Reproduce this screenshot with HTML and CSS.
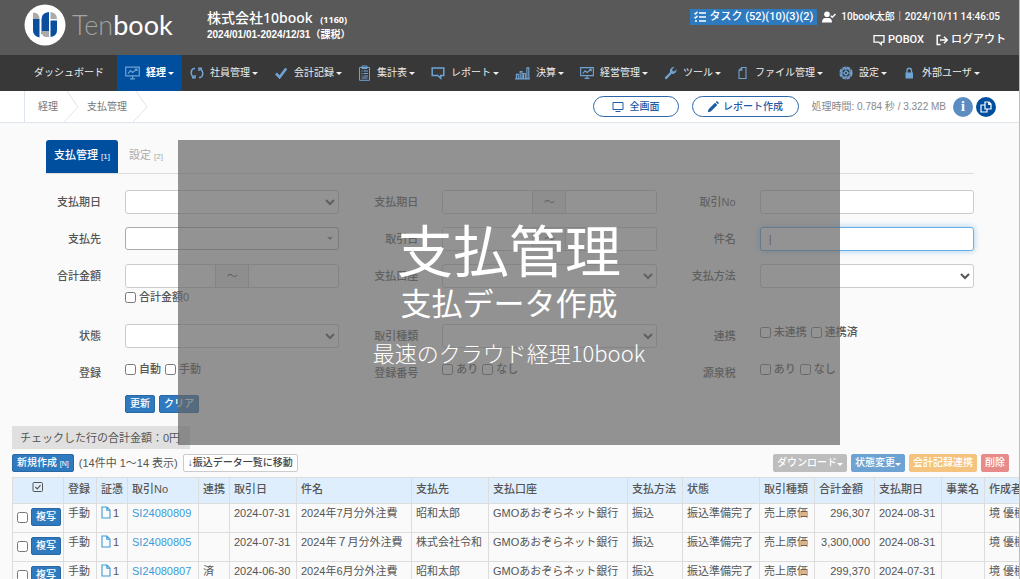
FILE: index.html
```html
<!DOCTYPE html>
<html lang="ja">
<head>
<meta charset="utf-8">
<title>支払管理 - Tenbook</title>
<link rel="stylesheet" href="styles.css">
</head>
<body>
<svg class="defs" width="0" height="0" aria-hidden="true">
  <symbol id="i-monitor" viewBox="0 0 15 14"><path d="M.7 1.2h13.6v8.6H.7zM5 12.800h5M7.500 10v2.800M3 7.600l2.400-3 2.200 1.900L12 3M9.800 3H12v2" fill="none" stroke="currentColor" stroke-width="1.200"/></symbol>
  <symbol id="i-cycle" viewBox="0 0 14 14"><path d="M5 2.500H3.800Q1.200 3.200 1.200 7q0 2.600 2.600 4M9 11.500h1.200q2.600-.7 2.600-4.500 0-2.600-2.600-4M2 11.800h3V9M12 2.200H9V5" fill="none" stroke="currentColor" stroke-width="1.500"/></symbol>
  <symbol id="i-check" viewBox="0 0 14 14"><path d="M2 7.500l3.600 3.700L12.200 2.500" fill="none" stroke="currentColor" stroke-width="2.600"/></symbol>
  <symbol id="i-clip" viewBox="0 0 13 16"><path d="M1.500 2.500h10v12.800h-10zM4 1h5v2.500H4zM3.500 6h1M5.500 6h4.500M3.500 8.500h1M5.500 8.500h4.500M3.500 11h1M5.500 11h4.500M3.500 13h6" fill="none" stroke="currentColor" stroke-width="1"/></symbol>
  <symbol id="i-chat" viewBox="0 0 14 14"><path d="M1.200 2h11.600v7.500H9.700v2.800L6.700 9.500H1.200z" fill="none" stroke="currentColor" stroke-width="1.500"/></symbol>
  <symbol id="i-bars" viewBox="0 0 16 14"><path d="M0 13.300h16M1.500 13V8.500h2V13M5.500 13V5.500h2V13M9 13V7.500h2V13M12.700 13V1.500h2V13" fill="none" stroke="currentColor" stroke-width="1.200"/></symbol>
  <symbol id="i-wrench" viewBox="0 0 13 14"><path d="M1 11.200L6 6.300Q5.300 3.500 7.300 2q1.400-1.200 3-.8L8.200 3.300l.3 1.800 1.800.3 2.100-2.100q.5 1.800-.8 3.300-1.500 1.700-4 1.200L2.700 12.900q-.7.500-1.500-.1-.7-.9-.2-1.600z" fill="currentColor"/></symbol>
  <symbol id="i-file" viewBox="0 0 12 14"><path d="M4.800 1.500H9v11H2V4.300zM4.800 1.500v2.800H2" fill="none" stroke="currentColor" stroke-width="1.100"/></symbol>
  <symbol id="i-gear" viewBox="0 0 14 14"><circle cx="7" cy="7" r="5.800" fill="none" stroke="currentColor" stroke-width="1.600" stroke-dasharray="3.700 .85"/><circle cx="7" cy="7" r="4.400" fill="none" stroke="currentColor" stroke-width="1.300"/><circle cx="7" cy="7" r="1.700" fill="none" stroke="currentColor" stroke-width="1.200"/><path d="M7 3v2.300M7 8.700V11M3 7h2.300M8.700 7H11" stroke="currentColor"/></symbol>
  <symbol id="i-lock" viewBox="0 0 13 14"><path d="M2.500 6.500h7.500v6H2.500z" fill="currentColor"/><path d="M4 7V4.500a2.200 2.200 0 0 1 4.500 0V7" fill="none" stroke="currentColor" stroke-width="1.300"/></symbol>
  <symbol id="i-tasks" viewBox="0 0 12 12"><path d="M.5 2l1 1L3.500.8M.5 6l1 1 2-2.200M5 2h7M5 6h7M5 10h7M1 10h2" fill="none" stroke="currentColor" stroke-width="1.400"/></symbol>
  <symbol id="i-user" viewBox="0 0 14 12"><circle cx="5" cy="3.300" r="2.800" fill="currentColor"/><path d="M0 11.500Q0 7 3.500 7h3Q10 7 10 11.500z" fill="currentColor"/><path d="M8.800 4.800l1.500 1.500L13.500 3" fill="none" stroke="currentColor" stroke-width="1.400"/></symbol>
  <symbol id="i-out" viewBox="0 0 12 12"><path d="M4.500 1.500H1.200v9h3.300M4 6h7M8 2.800L11.200 6 8 9.200" fill="none" stroke="currentColor" stroke-width="1.500"/></symbol>
  <symbol id="i-screen" viewBox="0 0 12 12"><path d="M1 1.500h10v7H1zM3.500 10.500h5" fill="none" stroke="currentColor" stroke-width="1"/></symbol>
  <symbol id="i-pencil" viewBox="0 0 12 12"><path d="M.8 11.200l.7-3L8 1.700l2.300 2.300-6.500 6.500zM8.700 1l.8-.7q.6-.3 1 .1l1.100 1.200q.4.500 0 1l-.7.700z" fill="currentColor"/></symbol>
  <symbol id="i-copy" viewBox="0 0 12 12"><path d="M5 1h4l2 2v5H5zM5 4H1v7h6V8M8.700 1v2.300H11" fill="none" stroke="currentColor" stroke-width="1.200"/></symbol>
  <symbol id="i-doc" viewBox="0 0 10 13"><path d="M1 1h4.800L9 4.200V12H1zM5.800 1v3.200H9" fill="none" stroke="currentColor" stroke-width="1.100"/></symbol>
  <symbol id="i-checkbox" viewBox="0 0 12 12"><rect x="1" y="1.500" width="9.500" height="9" rx="1" fill="none" stroke="currentColor"/><path d="M3.300 5.800l2 2 3.200-3.600" fill="none" stroke="currentColor" stroke-width="1.200"/></symbol>
</svg>

<header class="top">
  <a class="logo" href="#">
    <svg class="logo-mark" viewBox="0 0 42 42" aria-hidden="true">
      <circle cx="21" cy="21" r="20.500" fill="#fff"/>
      <path d="M9 8.500q6.500.3 6.500 6.500H9z" fill="#aaa"/><path d="M9 15h6.500v18.500Q9 32 9 26z" fill="#0a4f9e"/>
      <path d="M17.500 15q0-6 7.500-7v22h-7.500z" fill="#0a4f9e"/><path d="M17.500 27H25v6h-3q-4.500-.5-4.500-6z" fill="#aaa"/>
      <path d="M26.500 8q6.500 1 6.500 7h-6.500z" fill="#aaa"/><path d="M26.500 16.500H33V26q0 6-6.500 7z" fill="#0a4f9e"/>
    </svg>
    <span class="logo-text"><span class="logo-dim">Ten</span>book</span>
  </a>
  <div class="company">
    <div class="company-name">株式会社10book <small>(1160)</small></div>
    <div class="company-term">2024/01/01-2024/12/31（課税）</div>
  </div>
  <div class="account">
    <div class="account-row">
      <a class="task" href="#"><svg class="ico12"><use href="#i-tasks"/></svg>タスク (52)(10)(3)(2)</a>
      <svg class="ico14"><use href="#i-user"/></svg><span>10book太郎｜2024/10/11 14:46:05</span>
    </div>
    <div class="account-row links">
      <a href="#"><svg class="ico12"><use href="#i-chat"/></svg>POBOX</a>
      <a href="#"><svg class="ico12"><use href="#i-out"/></svg>ログアウト</a>
    </div>
  </div>
</header>

<nav class="nav">
  <a class="dash" href="#">ダッシュボード</a>
  <a class="active" href="#"><svg class="w15"><use href="#i-monitor"/></svg>経理<i class="caret"></i></a>
  <a href="#"><svg class="w14"><use href="#i-cycle"/></svg>社員管理<i class="caret"></i></a>
  <a href="#"><svg class="w14"><use href="#i-check"/></svg>会計記録<i class="caret"></i></a>
  <a href="#"><svg class="w13"><use href="#i-clip"/></svg>集計表<i class="caret"></i></a>
  <a href="#"><svg class="w14"><use href="#i-chat"/></svg>レポート<i class="caret"></i></a>
  <a href="#"><svg class="w15"><use href="#i-bars"/></svg>決算<i class="caret"></i></a>
  <a href="#"><svg class="w14"><use href="#i-monitor"/></svg>経営管理<i class="caret"></i></a>
  <a href="#"><svg class="w13"><use href="#i-wrench"/></svg>ツール<i class="caret"></i></a>
  <a href="#"><svg class="w12"><use href="#i-file"/></svg>ファイル管理<i class="caret"></i></a>
  <a href="#"><svg class="w14"><use href="#i-gear"/></svg>設定<i class="caret"></i></a>
  <a href="#"><svg class="w13"><use href="#i-lock"/></svg>外部ユーザ<i class="caret"></i></a>
</nav>

<div class="subbar">
  <div class="crumbs">
    <a href="#">経理</a><svg class="sep" viewBox="0 0 16 31"><path d="M4 0l11 16L1 31" fill="none" stroke="#dde4ec"/></svg>
    <a href="#">支払管理</a><svg class="sep" viewBox="0 0 16 31"><path d="M4 0l11 16L1 31" fill="none" stroke="#dde4ec"/></svg>
  </div>
  <div class="tools">
    <button class="pill" type="button"><svg class="ico12"><use href="#i-screen"/></svg>全画面</button>
    <button class="pill wide" type="button"><svg class="ico12"><use href="#i-pencil"/></svg>レポート作成</button>
    <span class="time">処理時間: 0.784 秒 / 3.322 MB</span>
    <button class="round info" type="button" aria-label="情報">i</button>
    <button class="round" type="button" aria-label="コピー"><svg class="ico12"><use href="#i-copy"/></svg></button>
  </div>
</div>

<main>
  <div class="tabs">
    <a class="tab on" href="#">支払管理 <small>[1]</small></a>
    <a class="tab" href="#">設定 <small>[2]</small></a>
  </div>

  <form class="search">
    <div class="field"><label for="f1">支払期日</label><select id="f1" class="ctl"><option></option></select></div>
    <div class="field"><label for="f2">支払期日</label><div class="range"><input id="f2" type="text"><span>～</span><input type="text" aria-label="支払期日 終了"></div></div>
    <div class="field"><label for="f3">取引No</label><input id="f3" class="ctl" type="text"></div>

    <div class="field"><label for="f4">支払先</label><button id="f4" class="ctl combo" type="button"><i class="caret"></i></button></div>
    <div class="field"><label for="f5">取引日</label><div class="range"><input id="f5" type="text"><span>～</span><input type="text" aria-label="取引日 終了"></div></div>
    <div class="field"><label for="f6">件名</label><input id="f6" class="ctl focus" type="text" value="|"></div>

    <div class="field tall"><label for="f7">合計金額</label><div class="stack"><div class="range"><input id="f7" type="text"><span>～</span><input type="text" aria-label="合計金額 上限"></div><div class="checks"><label><input type="checkbox">合計金額0</label></div></div></div>
    <div class="field tall"><label for="f8">支払口座</label><select id="f8" class="ctl"><option></option></select></div>
    <div class="field tall"><label for="f9">支払方法</label><select id="f9" class="ctl"><option></option></select></div>

    <div class="field"><label for="f10">状態</label><select id="f10" class="ctl"><option></option></select></div>
    <div class="field"><label for="f11">取引種類</label><select id="f11" class="ctl"><option></option></select></div>
    <div class="field"><span class="name">連携</span><div class="checks"><label><input type="checkbox">未連携</label><label><input type="checkbox">連携済</label></div></div>

    <div class="field"><span class="name">登録</span><div class="checks"><label><input type="checkbox">自動</label><label><input type="checkbox">手動</label></div></div>
    <div class="field"><span class="name">登録番号</span><div class="checks"><label><input type="checkbox">あり</label><label><input type="checkbox">なし</label></div></div>
    <div class="field"><span class="name">源泉税</span><div class="checks"><label><input type="checkbox">あり</label><label><input type="checkbox">なし</label></div></div>

    <div class="actions"><button class="btn" type="button">更新</button><button class="btn" type="button">クリア</button></div>
  </form>

  <div class="sum">チェックした行の合計金額：0円</div>

  <div class="bar">
    <button class="btn" type="button">新規作成 <small>[N]</small></button>
    <span class="count">(14件中 1～14 表示)</span>
    <button class="btn plain" type="button">↓振込データ一覧に移動</button>
    <div class="bar-right">
      <button class="btn grey" type="button">ダウンロード<i class="caret"></i></button>
      <button class="btn sky" type="button">状態変更<i class="caret"></i></button>
      <button class="btn amber" type="button">会計記録連携</button>
      <button class="btn red" type="button">削除</button>
    </div>
  </div>

  <div class="table-wrap">
    <table class="list">
      <colgroup><col class="c51"><col class="c33"><col class="c31"><col class="c71"><col class="c31"><col class="c67"><col class="c115"><col class="c77"><col class="c139"><col class="c55"><col class="c77"><col class="c55"><col class="c60"><col class="c67"><col class="c43"><col class="c67"></colgroup>
      <thead><tr><th class="mid"><svg class="ico12"><use href="#i-checkbox"/></svg></th><th>登録</th><th>証憑</th><th>取引No</th><th>連携</th><th>取引日</th><th>件名</th><th>支払先</th><th>支払口座</th><th>支払方法</th><th>状態</th><th>取引種類</th><th>合計金額</th><th>支払期日</th><th>事業名</th><th>作成者</th></tr></thead>
      <tbody>
        <tr><td><div class="pick"><input type="checkbox" aria-label="SI24080809"><button class="btn" type="button">複写</button></div></td><td>手動</td><td><svg class="doc"><use href="#i-doc"/></svg>1</td><td><a href="#">SI24080809</a></td><td></td><td>2024-07-31</td><td>2024年7月分外注費</td><td>昭和太郎</td><td>GMOあおぞらネット銀行</td><td>振込</td><td>振込準備完了</td><td>売上原価</td><td class="num">296,307</td><td>2024-08-31</td><td></td><td>境 優樹</td></tr>
        <tr><td><div class="pick"><input type="checkbox" aria-label="SI24080805"><button class="btn" type="button">複写</button></div></td><td>手動</td><td><svg class="doc"><use href="#i-doc"/></svg>1</td><td><a href="#">SI24080805</a></td><td></td><td>2024-07-31</td><td>2024年７月分外注費</td><td>株式会社令和</td><td>GMOあおぞらネット銀行</td><td>振込</td><td>振込準備完了</td><td>売上原価</td><td class="num">3,300,000</td><td>2024-08-31</td><td></td><td>境 優樹</td></tr>
        <tr><td><div class="pick"><input type="checkbox" aria-label="SI24080807"><button class="btn" type="button">複写</button></div></td><td>手動</td><td><svg class="doc"><use href="#i-doc"/></svg>1</td><td><a href="#">SI24080807</a></td><td>済</td><td>2024-06-30</td><td>2024年6月分外注費</td><td>昭和太郎</td><td>GMOあおぞらネット銀行</td><td>振込</td><td>振込準備完了</td><td>売上原価</td><td class="num">299,370</td><td>2024-07-31</td><td></td><td>境 優樹</td></tr>
      </tbody>
    </table>
  </div>
</main>

<section class="overlay">
  <h1>支払管理</h1>
  <h2>支払データ作成</h2>
  <p>最速のクラウド経理10book</p>
</section>
</body>
</html>
```
FILE: styles.css
```css
* { box-sizing: border-box; }
html { height: 100%; }
body {
  position: relative;
  margin: 0;
  height: 100%;
  overflow: hidden;
  background: #fafafa;
  border-right: 1px solid #bdbdbd;
  color: #555;
  font: 11px/16px "Liberation Sans", "Noto Sans CJK JP", sans-serif;
}
a { color: inherit; text-decoration: none; }
button, input, select { font: inherit; color: inherit; margin: 0; }
svg { flex: none; }
.defs { position: absolute; }
.ico12 { width: 12px; height: 12px; }
.ico14 { width: 14px; height: 12px; }
.caret {
  display: inline-block;
  margin-left: 2px;
  border: 3px solid transparent;
  border-top-color: currentColor;
  border-bottom: 0;
}

.top {
  display: flex;
  height: 55px;
  padding: 4px 13px 0 24px;
  background: #595959;
  color: #fff;
}
.logo { display: flex; align-items: center; gap: 6px; width: 183px; height: 42px; }
.logo-mark { width: 42px; height: 42px; }
.logo-text { font: 400 27px/42px Lato, sans-serif; color: #fff; }
.logo-dim { color: #a3a3a3; font-weight: 300; }
.company-name { font: 500 14px/20px "Noto Sans", "Noto Sans CJK JP", sans-serif; padding-top: 4px; }
.company-name small { font: bold 9px "Noto Sans", sans-serif; margin-left: 4px; }
.company-term { font: bold 10px/13px "Liberation Sans", "Noto Sans CJK JP", sans-serif; }
.account { margin-left: auto; font-family: Roboto, "Noto Sans CJK JP", sans-serif; font-weight: 500; }
.account-row { display: flex; align-items: center; justify-content: flex-end; gap: 5px; height: 16px; margin-top: 5px; padding-right: 6px; font-size: 10px; }
.task { display: flex; align-items: center; gap: 3px; height: 16px; padding: 0 4px; background: #2f7abf; font-size: 11px; }
.links { gap: 12px; margin-top: 7px; padding: 0; font-size: 11px; }
.links a { display: flex; align-items: center; gap: 3px; }

.nav { display: flex; height: 36px; padding-left: 20px; background: #383838; color: #eee; font-size: 10px; font-weight: 400; }
.nav a { display: flex; align-items: center; padding: 0 8px; white-space: nowrap; }
.nav .dash { padding: 0 13px 0 14px; }
.nav .active { background: #004f9f; color: #fff; font-weight: 700; }
.nav svg { height: 16px; margin-right: 6px; color: #6fa3d4; }
.w12 { width: 12px; }
.w13 { width: 13px; }
.w14 { width: 14px; }
.w15 { width: 15px; }

.subbar { display: flex; align-items: center; justify-content: space-between; height: 32px; padding: 0 23px 0 24px; background: #fff; border-bottom: 1px solid #dfe5ec; }
.crumbs { display: flex; align-items: center; height: 31px; border-left: 1px solid #dde4ec; padding-left: 13px; font-size: 10px; color: #777; }
.sep { width: 16px; height: 31px; margin: 0 8px 0 5px; }
.tools { display: flex; align-items: center; }
.pill { display: flex; align-items: center; justify-content: center; gap: 6px; width: 86px; height: 21px; padding: 0; margin-right: 13px; background: #fff; border: 1px solid #2b66aa; border-radius: 11px; color: #1d5ca5; font-size: 10px; font-weight: 500; line-height: 16px; }
.pill.wide { width: 107px; gap: 4px; }
.time { font-size: 10px; color: #888; margin-right: 7px; }
.round { display: flex; align-items: center; justify-content: center; width: 20px; height: 20px; margin-left: 3px; padding: 0; border: 0; border-radius: 50%; background: #004f9f; color: #fff; }
.round.info { margin-left: 0; background: #5b8dc3; font: bold 14px "Liberation Serif", serif; }

.tabs { display: flex; margin: 17px 45px 0 46px; border-bottom: 1px solid #ddd; }
.tab { height: 33px; padding: 7px 8px 0; color: #aaa; line-height: 16px; }
.tab small { font-size: 8px; }
.tab.on { margin-right: 3px; background: #004f9f; color: #fff; border-radius: 3px 3px 0 0; font-weight: 500; }

.search { display: grid; grid-template-columns: repeat(3, 1fr); gap: 13px 24px; margin: 16px 45px 0 46px; }
.field { display: grid; grid-template-columns: 55px minmax(0, 1fr); column-gap: 24px; align-items: start; min-height: 21px; }
.field.tall { min-height: 47px; }
.field > label, .name { padding-top: 4px; text-align: right; font-weight: 500; }
.ctl { width: 100%; height: 24px; padding: 0 8px; background: #fff; border: 1px solid #ccc; border-radius: 3px; outline: 0; }
.combo { display: flex; align-items: center; justify-content: flex-end; padding: 0 5px; height: 23px; border-color: #aaa; color: #888; }
.focus { border-color: #66afe9; box-shadow: 0 0 6px rgba(102, 175, 233, .6); }
.range { display: grid; grid-template-columns: 1fr 34px 1fr; height: 24px; border: 1px solid #ccc; border-radius: 3px; overflow: hidden; }
.range input { width: 100%; height: 22px; border: 0; background: #fff; }
.range span { border: 1px solid #ccc; border-width: 0 1px; background: #eee; text-align: center; line-height: 22px; }
.checks { display: flex; gap: 4px; font-weight: 500; }
.checks label { display: flex; align-items: center; gap: 3px; }
.checks input, .pick input { width: 11px; height: 11px; }
.stack .checks { padding-top: 1px; }
.actions { grid-column: 1 / -1; display: flex; gap: 4px; padding-left: 79px; }

.btn { height: 18px; padding: 0 4px; background: #2f7abf; border: 1px solid #2869a5; border-radius: 2px; color: #fff; font-size: 10px; font-weight: 500; line-height: 14px; white-space: nowrap; }
.btn small { font-size: 7px; }
.plain { background: #fff; border-color: #ccc; color: #444; }
.grey { background: #bdbdbd; border-color: #bdbdbd; }
.sky { background: #6da3d3; border-color: #6da3d3; }
.amber { background: #f4c47f; border-color: #f4c47f; }
.red { background: #e68a8a; border-color: #e68a8a; }

.sum { width: fit-content; margin: 13px 0 0 12px; padding: 4px 10px 3px 8px; background: #e0e0e0; }
.bar { display: flex; align-items: center; gap: 5px; margin: 5px 10px 5px 12px; }
.bar-right { display: flex; gap: 4px; margin-left: auto; }
.bar-right .btn { padding: 0 3px; }
.bar-right .caret { margin-left: 0; }

.table-wrap { margin-left: 12px; overflow: hidden; }
.list { width: 1039px; table-layout: fixed; border-collapse: collapse; white-space: nowrap; }
.list th, .list td { height: 29px; padding: 1px 0 0 4px; border: 1px solid #ddd; text-align: left; vertical-align: top; line-height: 17px; }
.list th { height: 26px; padding-top: 3px; background: #dfeefc; font-weight: 500; }
.list .mid { text-align: center; padding-right: 4px; }
.list .num { text-align: right; padding-right: 4px; }
.list a { color: #3c9ad6; }
.doc { width: 10px; height: 13px; margin-right: 2px; color: #3c9ad6; vertical-align: -2px; }
.pick { display: flex; align-items: center; gap: 3px; padding-top: 3px; }
.c31 { width: 31px; }
.c33 { width: 33px; }
.c43 { width: 43px; }
.c51 { width: 51px; }
.c55 { width: 55px; }
.c60 { width: 60px; }
.c67 { width: 67px; }
.c71 { width: 71px; }
.c77 { width: 77px; }
.c115 { width: 115px; }
.c139 { width: 139px; }

.overlay {
  position: absolute;
  top: 140px;
  left: 178px;
  right: 179px;
  height: 305px;
  padding-top: 74px;
  background: rgba(101, 101, 101, .7);
  color: #fff;
  text-align: center;
  font-family: "Noto Sans CJK JP", sans-serif;
}
.overlay h1 { margin: 0; font-size: 56px; font-weight: 400; line-height: 68px; }
.overlay h2 { margin: 0; font-size: 31px; font-weight: 400; line-height: 40px; }
.overlay p { margin: 12px 0 0; font-size: 22px; font-weight: 300; line-height: 36px; }
```
